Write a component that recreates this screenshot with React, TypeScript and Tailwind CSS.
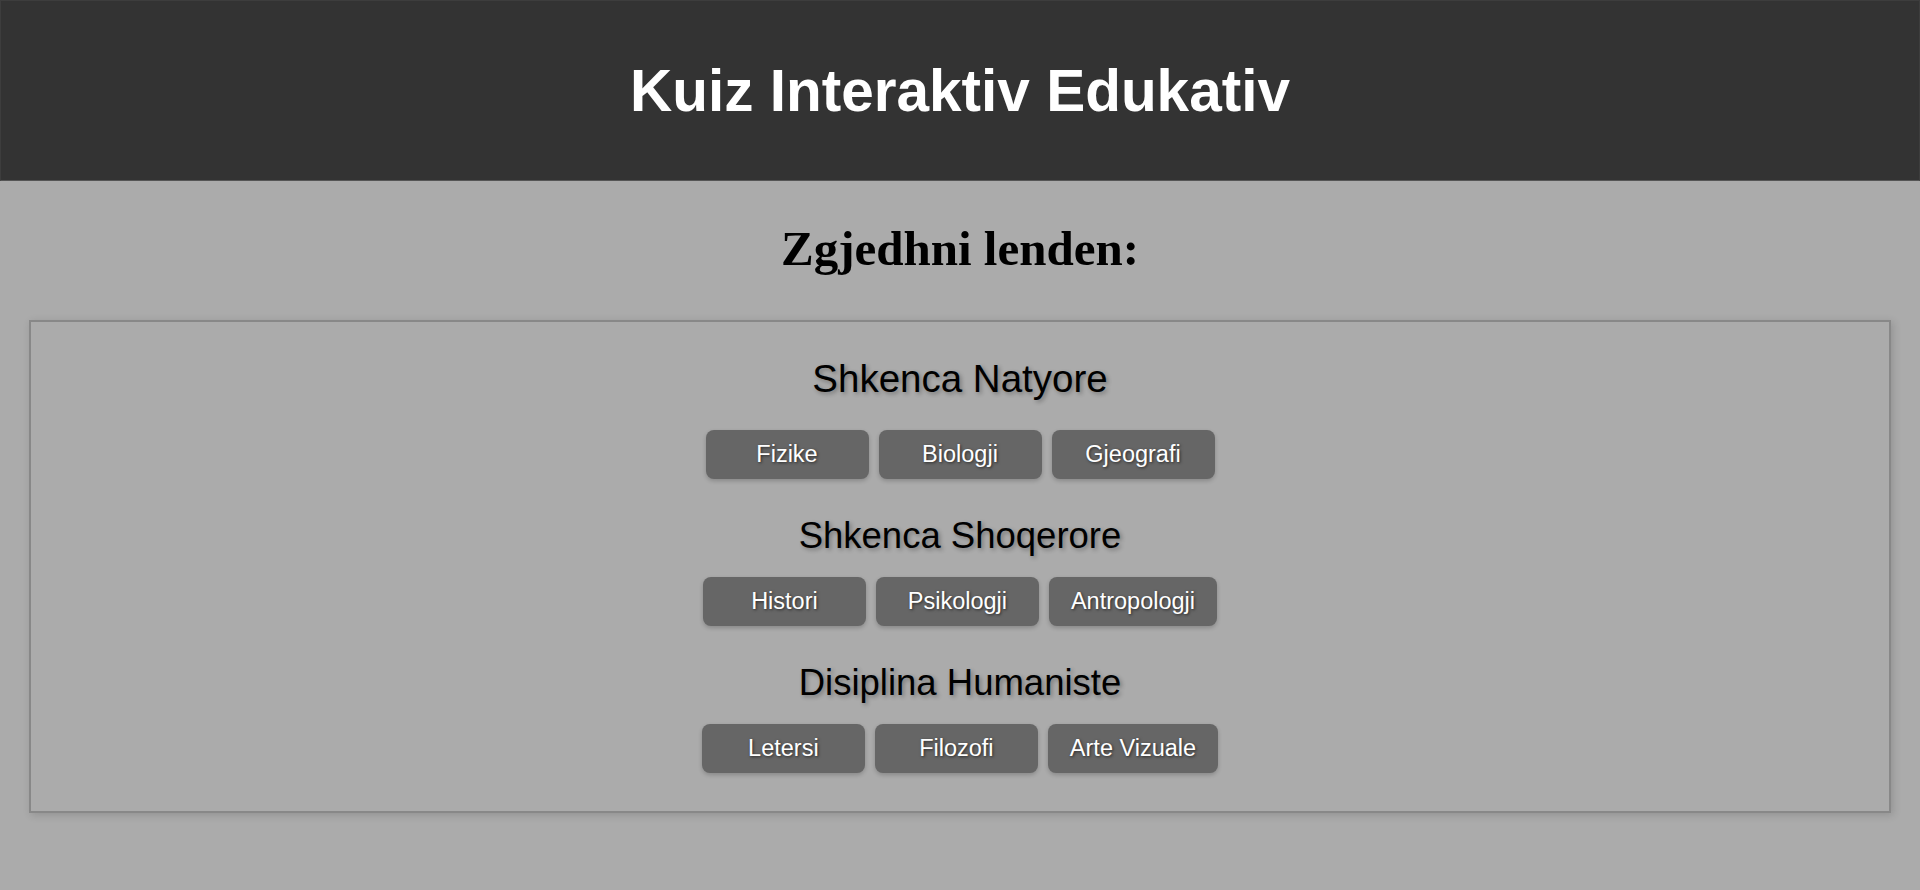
const sections = [
  { title: "Shkenca Natyore", size: "text-[38.5px]", subjects: ["Fizike", "Biologji", "Gjeografi"] },
  { title: "Shkenca Shoqerore", size: "text-[36.5px]", subjects: ["Histori", "Psikologji", "Antropologji"] },
  { title: "Disiplina Humaniste", size: "text-[36.5px]", subjects: ["Letersi", "Filozofi", "Arte Vizuale"] },
];

export default function App() {
  return (
    <div className="min-h-screen bg-[#ababab] leading-[normal] font-['Liberation_Sans',Arial,sans-serif]">
      <header className="h-[181px] flex items-center justify-center bg-[#333] border border-[#3d3d3d] border-b-[#555]">
        <h1 className="text-[58.5px] font-bold text-white">Kuiz Interaktiv Edukativ</h1>
      </header>

      <h2 className="mt-[39px] text-center text-[49px] font-bold text-black font-['Liberation_Serif','Times_New_Roman',serif]">
        Zgjedhni lenden:
      </h2>

      <div className="mx-[29px] mt-[43px] border-2 border-[#888] pt-[35px] pb-[38px] shadow-[2px_2px_8px_rgba(0,0,0,0.15)]">
        {sections.map((section, i) => (
          <div key={section.title} className={i > 0 ? "mt-[36px]" : ""}>
            <h3
              className={`${section.size} text-center text-black [text-shadow:2px_2px_4px_rgba(0,0,0,0.3)]`}
            >
              {section.title}
            </h3>
            <div className={`flex justify-center gap-[10px] ${i === 0 ? "mt-[29px]" : "mt-[20px]"}`}>
              {section.subjects.map((subject) => (
                <button
                  key={subject}
                  className="h-[49px] min-w-[163px] px-[22px] rounded-lg bg-[#666] text-[23.5px] text-white shadow-[0_2px_4px_rgba(0,0,0,0.2)] [text-shadow:1px_1px_3px_rgba(0,0,0,0.6)]"
                >
                  {subject}
                </button>
              ))}
            </div>
          </div>
        ))}
      </div>
    </div>
  );
}
